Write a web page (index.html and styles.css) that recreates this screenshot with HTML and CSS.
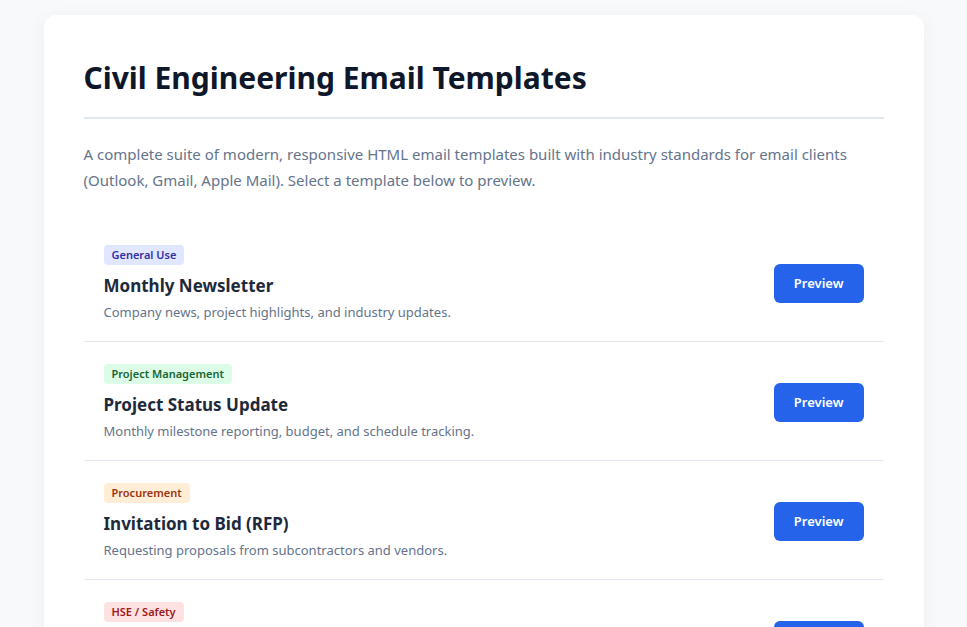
FILE: index.html
```html
<!DOCTYPE html>
<html lang="en">
<head>
    <meta charset="UTF-8">
    <meta name="viewport" content="width=device-width, initial-scale=1.0">
    <title>Civil Engineering Email Templates</title>
    <link rel="stylesheet" href="styles.css">
</head>
<body>
    <div class="container">
        <header class="page-header">
            <h1>Civil Engineering Email Templates</h1>
        </header>

        <p class="intro">A complete suite of modern, responsive HTML email templates built with industry standards for email clients (Outlook, Gmail, Apple Mail). Select a template below to preview.</p>

        <ul class="template-list">
            <li class="template-item">
                <div class="template-info">
                    <span class="tag tag-general">General Use</span>
                    <h3>Monthly Newsletter</h3>
                    <p>Company news, project highlights, and industry updates.</p>
                </div>
                <a href="#" class="btn">Preview</a>
            </li>
            <li class="template-item">
                <div class="template-info">
                    <span class="tag tag-project">Project Management</span>
                    <h3>Project Status Update</h3>
                    <p>Monthly milestone reporting, budget, and schedule tracking.</p>
                </div>
                <a href="#" class="btn">Preview</a>
            </li>
            <li class="template-item">
                <div class="template-info">
                    <span class="tag tag-procurement">Procurement</span>
                    <h3>Invitation to Bid (RFP)</h3>
                    <p>Requesting proposals from subcontractors and vendors.</p>
                </div>
                <a href="#" class="btn">Preview</a>
            </li>
            <li class="template-item">
                <div class="template-info">
                    <span class="tag tag-safety">HSE / Safety</span>
                    <h3>Safety Alert Notice</h3>
                    <p>Urgent site safety notices and incident reporting.</p>
                </div>
                <a href="#" class="btn">Preview</a>
            </li>
        </ul>
    </div>
</body>
</html>
```

FILE: styles.css
```css
/* Index of email templates */
body {
    margin: 0;
    padding: 15px 0;
    background-color: #f8f9fb;
    font-family: "Noto Sans", "Open Sans", sans-serif;
    color: #1e293b;
}

.container {
    max-width: 800px;
    margin: 0 auto;
    padding: 40px;
    background-color: #fff;
    border-radius: 12px;
    box-shadow: 0 4px 20px rgba(15, 23, 42, 0.05);
}

.page-header {
    padding-bottom: 20px;
    border-bottom: 2px solid #e2e8f0;
}

.page-header h1 {
    margin: 0;
    padding-top: 4px;
    font-size: 30px;
    line-height: 38px;
    font-weight: 700;
    color: #0f172a;
}

.intro {
    margin: 22px 0 30px;
    font-size: 15px;
    line-height: 26px;
    color: #64748b;
}

.template-list {
    list-style: none;
    margin: 0;
    padding: 0;
}

.template-item {
    display: flex;
    align-items: center;
    justify-content: space-between;
    padding: 22px 20px 19px;
    border-bottom: 1px solid #e2e8f0;
}

.template-info {
    display: flex;
    flex-direction: column;
    align-items: flex-start;
}

.template-info h3 {
    margin: 9px 0 4px;
    font-size: 17px;
    line-height: 24px;
    font-weight: 700;
    color: #1e293b;
}

.template-info p {
    margin: 0;
    font-size: 13px;
    line-height: 20px;
    color: #64748b;
}

.tag {
    padding: 2px 8px;
    border-radius: 4px;
    font-size: 11px;
    line-height: 16px;
    font-weight: 600;
}

.tag-general { background-color: #e0e7ff; color: #3730a3; }
.tag-project { background-color: #dcfce7; color: #166534; }
.tag-procurement { background-color: #ffedd5; color: #9a3412; }
.tag-safety { background-color: #fee2e2; color: #991b1b; }

.btn {
    padding: 10px 20px;
    background-color: #2563eb;
    color: #fff;
    text-decoration: none;
    font-size: 13px;
    line-height: 19px;
    font-weight: 600;
    border-radius: 6px;
}
```
